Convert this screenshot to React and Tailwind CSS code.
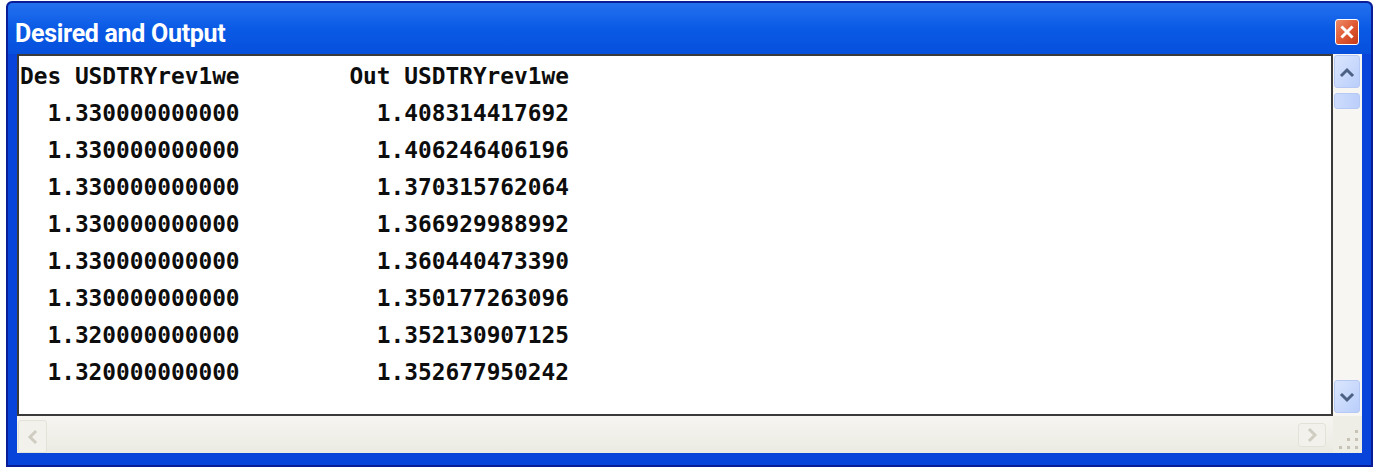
import React from 'react';

const rows = [
  ['1.330000000000', '1.408314417692'],
  ['1.330000000000', '1.406246406196'],
  ['1.330000000000', '1.370315762064'],
  ['1.330000000000', '1.366929988992'],
  ['1.330000000000', '1.360440473390'],
  ['1.330000000000', '1.350177263096'],
  ['1.320000000000', '1.352130907125'],
  ['1.320000000000', '1.352677950242'],
];

function Chevron({ dir, color }) {
  // small thick arrow used on the scroll buttons
  const paths = {
    up: 'M3 11 L8 6 L13 11',
    down: 'M3 6 L8 11 L13 6',
    left: 'M10 3 L5 8 L10 13',
    right: 'M6 3 L11 8 L6 13',
  };
  return (
    <svg width="16" height="16" viewBox="0 0 16 16">
      <path d={paths[dir]} fill="none" stroke={color} strokeWidth="3" strokeLinecap="square" />
    </svg>
  );
}

function ScrollButton({ dir, className = '' }) {
  return (
    <div
      className={`flex items-center justify-center rounded-[3px] border border-[#b6c9f5] bg-gradient-to-br from-[#dbe6fe] to-[#b9cefa] ${className}`}
    >
      <Chevron dir={dir} color="#4d6185" />
    </div>
  );
}

function DisabledButton({ dir, className = '' }) {
  return (
    <div
      className={`flex items-center justify-center rounded-[3px] border border-[#e4e2d8] bg-[#f2f1ec] ${className}`}
    >
      <Chevron dir={dir} color="#cfccc1" />
    </div>
  );
}

function App() {
  return (
    <div className="min-h-screen bg-white pl-[6px] pt-[1px]">
      <div className="flex h-[466px] w-[1367px] flex-col rounded-t-[6px] border-2 border-[#0a1d96] bg-[#0944da]">
        {/* title bar */}
        <div className="flex h-[51px] items-center rounded-t-[5px] bg-gradient-to-b from-[#2371ee] via-[#0a5ae6] to-[#0650dc] pl-[7px] pr-[12px] pt-[6px]">
          <span
            className="mt-[3px] text-[25px] font-bold leading-none tracking-[-0.3px] text-white"
            style={{ fontFamily: 'Roboto, "DejaVu Sans", sans-serif' }}
          >
            Desired and Output
          </span>
          <div className="ml-auto flex h-[26px] w-[24px] items-center justify-center rounded-[3px] border border-white bg-gradient-to-br from-[#ee8a66] via-[#df5a34] to-[#c43a18]">
            <svg width="14" height="14" viewBox="0 0 14 14">
              <path d="M2.5 2.5 L11.5 11.5 M11.5 2.5 L2.5 11.5" stroke="white" strokeWidth="3" strokeLinecap="square" />
            </svg>
          </div>
        </div>

        {/* client area */}
        <div className="flex flex-1 flex-col pb-[12px] pl-[9px] pr-[9px]">
          <div className="flex h-[362px]">
            <div
              className="flex-1 border-2 border-[#3a3a3a] bg-white pl-px pt-[2px] text-[22.8px] font-bold leading-[37px] text-[#0d0d0d]"
              style={{ fontFamily: '"DejaVu Sans Mono", "Liberation Mono", monospace' }}
            >
              <div className="flex whitespace-pre">
                <span className="w-[16ch]">Des USDTRYrev1we</span>
                <span className="w-[24ch] text-right">Out USDTRYrev1we</span>
              </div>
              {rows.map(([des, out], i) => (
                <div key={i} className="flex whitespace-pre">
                  <span className="w-[16ch] text-right">{des}</span>
                  <span className="w-[24ch] text-right">{out}</span>
                </div>
              ))}
            </div>

            {/* vertical scrollbar */}
            <div className="flex w-[29px] flex-col bg-[#f7f6f2] pb-[3px] pl-px pr-[2px] pt-px">
              <ScrollButton dir="up" className="h-[33px]" />
              <div className="mt-[5px] h-[16px] rounded-[3px] border border-[#b6c9f5] bg-gradient-to-r from-[#cddcfd] to-[#bccffa]" />
              <div className="flex-1" />
              <ScrollButton dir="down" className="h-[33px]" />
            </div>
          </div>

          <div className="flex h-[37px]">
            {/* horizontal scrollbar */}
            <div className="flex flex-1 items-end bg-gradient-to-b from-[#f6f5f1] to-[#ebeae2] pl-px pr-[7px]">
              <DisabledButton dir="left" className="h-[33px] w-[29px]" />
              <div className="flex-1" />
              <DisabledButton dir="right" className="mb-[6px] h-[24px] w-[28px]" />
            </div>
            {/* size grip */}
            <div className="flex w-[29px] flex-col items-end justify-end gap-[5px] bg-[#efeee6] pb-[4px] pr-[4px]">
              <div className="flex gap-[5px]">
                <span className="h-[3px] w-[3px] bg-[#c6c3b6]" />
              </div>
              <div className="flex gap-[5px]">
                <span className="h-[3px] w-[3px] bg-[#c6c3b6]" />
                <span className="h-[3px] w-[3px] bg-[#c6c3b6]" />
              </div>
              <div className="flex gap-[5px]">
                <span className="h-[3px] w-[3px] bg-[#c6c3b6]" />
                <span className="h-[3px] w-[3px] bg-[#c6c3b6]" />
                <span className="h-[3px] w-[3px] bg-[#c6c3b6]" />
              </div>
            </div>
          </div>
        </div>
      </div>
    </div>
  );
}

export default App;
